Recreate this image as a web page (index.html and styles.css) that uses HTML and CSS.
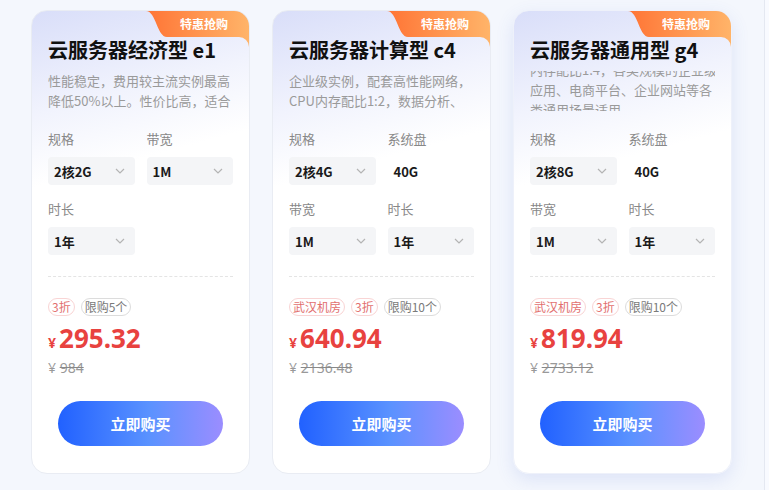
FILE: index.html
```html
<!DOCTYPE html>
<html lang="zh-CN">
<head>
    <meta charset="UTF-8">
    <meta name="viewport" content="width=device-width, initial-scale=1.0">
    <title>云服务器</title>
    <link rel="stylesheet" href="styles.css">
</head>
<body>
    <div class="cards">
        <!-- 经济型 -->
        <div class="card">
            <svg class="badge-bg" width="103" height="36" viewBox="0 0 103 36">
                <defs>
                    <linearGradient id="bg1" x1="0" y1="0" x2="1" y2="0">
                        <stop offset="0" stop-color="#ff7435"/>
                        <stop offset="1" stop-color="#ffb469"/>
                    </linearGradient>
                </defs>
                <path d="M0,0 H103 V36 A10,10 0 0 0 93,26 H21 C11,26 10,0 0,0 Z" fill="url(#bg1)"/>
            </svg>
            <span class="badge-text">特惠抢购</span>
            <h2 class="title">云服务器经济型 e1</h2>
            <div class="desc">
                <p class="desc-text">性能稳定，费用较主流实例最高降低50%以上。性价比高，适合个人开发者、学生等入门级场景</p>
            </div>
            <div class="specs">
                <div class="field">
                    <div class="label">规格</div>
                    <div class="select">2核2G<svg width="10" height="6" viewBox="0 0 10 6"><polyline points="1,1 5,5 9,1"/></svg></div>
                </div>
                <div class="field">
                    <div class="label">带宽</div>
                    <div class="select">1M<svg width="10" height="6" viewBox="0 0 10 6"><polyline points="1,1 5,5 9,1"/></svg></div>
                </div>
                <div class="field">
                    <div class="label">时长</div>
                    <div class="select">1年<svg width="10" height="6" viewBox="0 0 10 6"><polyline points="1,1 5,5 9,1"/></svg></div>
                </div>
            </div>
            <div class="divider"></div>
            <div class="tags">
                <span class="tag red">3折</span>
                <span class="tag gray">限购5个</span>
            </div>
            <div class="price"><span class="yen">¥</span>295.32</div>
            <div class="old-price">¥ <s>984</s></div>
            <button class="buy">立即购买</button>
        </div>

        <!-- 计算型 -->
        <div class="card">
            <svg class="badge-bg" width="103" height="36" viewBox="0 0 103 36">
                <defs>
                    <linearGradient id="bg2" x1="0" y1="0" x2="1" y2="0">
                        <stop offset="0" stop-color="#ff7435"/>
                        <stop offset="1" stop-color="#ffb469"/>
                    </linearGradient>
                </defs>
                <path d="M0,0 H103 V36 A10,10 0 0 0 93,26 H21 C11,26 10,0 0,0 Z" fill="url(#bg2)"/>
            </svg>
            <span class="badge-text">特惠抢购</span>
            <h2 class="title">云服务器计算型 c4</h2>
            <div class="desc">
                <p class="desc-text">企业级实例，配套高性能网络，<br>CPU内存配比1:2，数据分析、批量计算等场景适用</p>
            </div>
            <div class="specs">
                <div class="field">
                    <div class="label">规格</div>
                    <div class="select">2核4G<svg width="10" height="6" viewBox="0 0 10 6"><polyline points="1,1 5,5 9,1"/></svg></div>
                </div>
                <div class="field">
                    <div class="label">系统盘</div>
                    <div class="value">40G</div>
                </div>
                <div class="field">
                    <div class="label">带宽</div>
                    <div class="select">1M<svg width="10" height="6" viewBox="0 0 10 6"><polyline points="1,1 5,5 9,1"/></svg></div>
                </div>
                <div class="field">
                    <div class="label">时长</div>
                    <div class="select">1年<svg width="10" height="6" viewBox="0 0 10 6"><polyline points="1,1 5,5 9,1"/></svg></div>
                </div>
            </div>
            <div class="divider"></div>
            <div class="tags">
                <span class="tag red">武汉机房</span>
                <span class="tag red">3折</span>
                <span class="tag gray">限购10个</span>
            </div>
            <div class="price"><span class="yen">¥</span>640.94</div>
            <div class="old-price">¥ <s>2136.48</s></div>
            <button class="buy">立即购买</button>
        </div>

        <!-- 通用型 (hover) -->
        <div class="card active">
            <svg class="badge-bg" width="103" height="36" viewBox="0 0 103 36">
                <defs>
                    <linearGradient id="bg3" x1="0" y1="0" x2="1" y2="0">
                        <stop offset="0" stop-color="#ff7435"/>
                        <stop offset="1" stop-color="#ffb469"/>
                    </linearGradient>
                </defs>
                <path d="M0,0 H103 V36 A10,10 0 0 0 93,26 H21 C11,26 10,0 0,0 Z" fill="url(#bg3)"/>
            </svg>
            <span class="badge-text">特惠抢购</span>
            <h2 class="title">云服务器通用型 g4</h2>
            <div class="desc">
                <p class="desc-text scrolled">均衡的计算、内存和网络资源，<br>内存配比1:4，各类规模的企业级<br>应用、电商平台、企业网站等各<br>类通用场景适用</p>
            </div>
            <div class="specs">
                <div class="field">
                    <div class="label">规格</div>
                    <div class="select">2核8G<svg width="10" height="6" viewBox="0 0 10 6"><polyline points="1,1 5,5 9,1"/></svg></div>
                </div>
                <div class="field">
                    <div class="label">系统盘</div>
                    <div class="value">40G</div>
                </div>
                <div class="field">
                    <div class="label">带宽</div>
                    <div class="select">1M<svg width="10" height="6" viewBox="0 0 10 6"><polyline points="1,1 5,5 9,1"/></svg></div>
                </div>
                <div class="field">
                    <div class="label">时长</div>
                    <div class="select">1年<svg width="10" height="6" viewBox="0 0 10 6"><polyline points="1,1 5,5 9,1"/></svg></div>
                </div>
            </div>
            <div class="divider"></div>
            <div class="tags">
                <span class="tag red">武汉机房</span>
                <span class="tag red">3折</span>
                <span class="tag gray">限购10个</span>
            </div>
            <div class="price"><span class="yen">¥</span>819.94</div>
            <div class="old-price">¥ <s>2733.12</s></div>
            <button class="buy">立即购买</button>
        </div>
    </div>
</body>
</html>
```

FILE: styles.css
```css
/* Page */
html {
    background-color: #f8faff;
}

body {
    margin: 0;
    width: 765px;
    min-height: 100vh;
    box-sizing: border-box;
    border-right: 1px solid #e4e8f1;
    background-color: #f4f7fd;
    font-family: "Noto Sans CJK SC", "Noto Sans", sans-serif;
    color: #222;
}

.cards {
    display: flex;
    align-items: flex-start;
    gap: 22px;
    padding: 10px 0 0 31px;
}

/* Card */
.card {
    position: relative;
    width: 219px;
    height: 464px;
    box-sizing: border-box;
    padding: 25px 16px 0;
    border: 1px solid #e9ecf3;
    border-radius: 16px;
    overflow: hidden;
    background: linear-gradient(165deg, #d9def9 0%, #f1f3fd 20%, #ffffff 34%);
}

.card.active {
    border-color: #eef1fa;
    box-shadow: 0 6px 18px rgba(70, 100, 210, 0.13);
}

.badge-bg {
    position: absolute;
    top: 0;
    right: 0;
    display: block;
}

.badge-text {
    position: absolute;
    top: 5px;
    right: 21px;
    font-size: 12px;
    line-height: 16px;
    font-weight: bold;
    color: #fff;
}

.title {
    margin: 0;
    height: 28px;
    font-size: 20px;
    line-height: 28px;
    font-weight: bold;
    color: #111;
    white-space: nowrap;
}

.desc {
    margin-top: 7px;
    height: 40px;
    overflow: hidden;
}

.desc-text {
    margin: 0;
    font-size: 13px;
    line-height: 20px;
    color: #9a9a9a;
}

.desc-text.scrolled {
    margin-top: -31px;
    white-space: nowrap;
}

/* Spec selectors */
.specs {
    display: grid;
    grid-template-columns: 1fr 1fr;
    column-gap: 12px;
    row-gap: 14px;
    margin-top: 18px;
}

.label {
    height: 20px;
    font-size: 13px;
    line-height: 20px;
    color: #888;
    margin-bottom: 8px;
}

.select, .value {
    height: 28px;
    box-sizing: border-box;
    padding: 0 10px 0 6px;
    display: flex;
    align-items: center;
    justify-content: space-between;
    font-size: 13px;
    font-weight: bold;
    color: #1a1a1a;
}

.select {
    background-color: #f4f5f7;
    border-radius: 4px;
}

.select svg polyline {
    fill: none;
    stroke: #b4b4b4;
    stroke-width: 1.2;
}

.divider {
    margin-top: 21px;
    border-top: 1px dashed #e4e4e4;
}

/* Price area */
.tags {
    display: flex;
    gap: 6px;
    margin-top: 21px;
}

.tag {
    height: 18px;
    box-sizing: border-box;
    padding: 0 3px;
    border-radius: 9px;
    font-size: 12px;
    line-height: 16px;
}

.tag.red {
    border: 1px solid #f9d4d4;
    color: #e2706f;
}

.tag.gray {
    border: 1px solid #dcdcdc;
    color: #7a7a7a;
}

.price {
    height: 30px;
    margin-top: 7px;
    font-family: "Noto Sans", sans-serif;
    font-size: 26px;
    line-height: 30px;
    font-weight: bold;
    color: #e8423f;
}

.price .yen {
    font-size: 14px;
    margin-right: 3px;
}

.old-price {
    height: 20px;
    margin-top: 5px;
    font-family: "Noto Sans", sans-serif;
    font-size: 14px;
    line-height: 20px;
    color: #999;
}

.old-price s {
    text-decoration-color: #888;
}

.buy {
    display: block;
    width: 165px;
    height: 45px;
    margin: 23px auto 0;
    border: none;
    border-radius: 23px;
    background: linear-gradient(90deg, #2161ff 0%, #5a92ff 55%, #9b8dff 100%);
    font-family: "Noto Sans CJK SC", sans-serif;
    font-size: 15px;
    font-weight: bold;
    color: #fff;
    cursor: pointer;
}
```
